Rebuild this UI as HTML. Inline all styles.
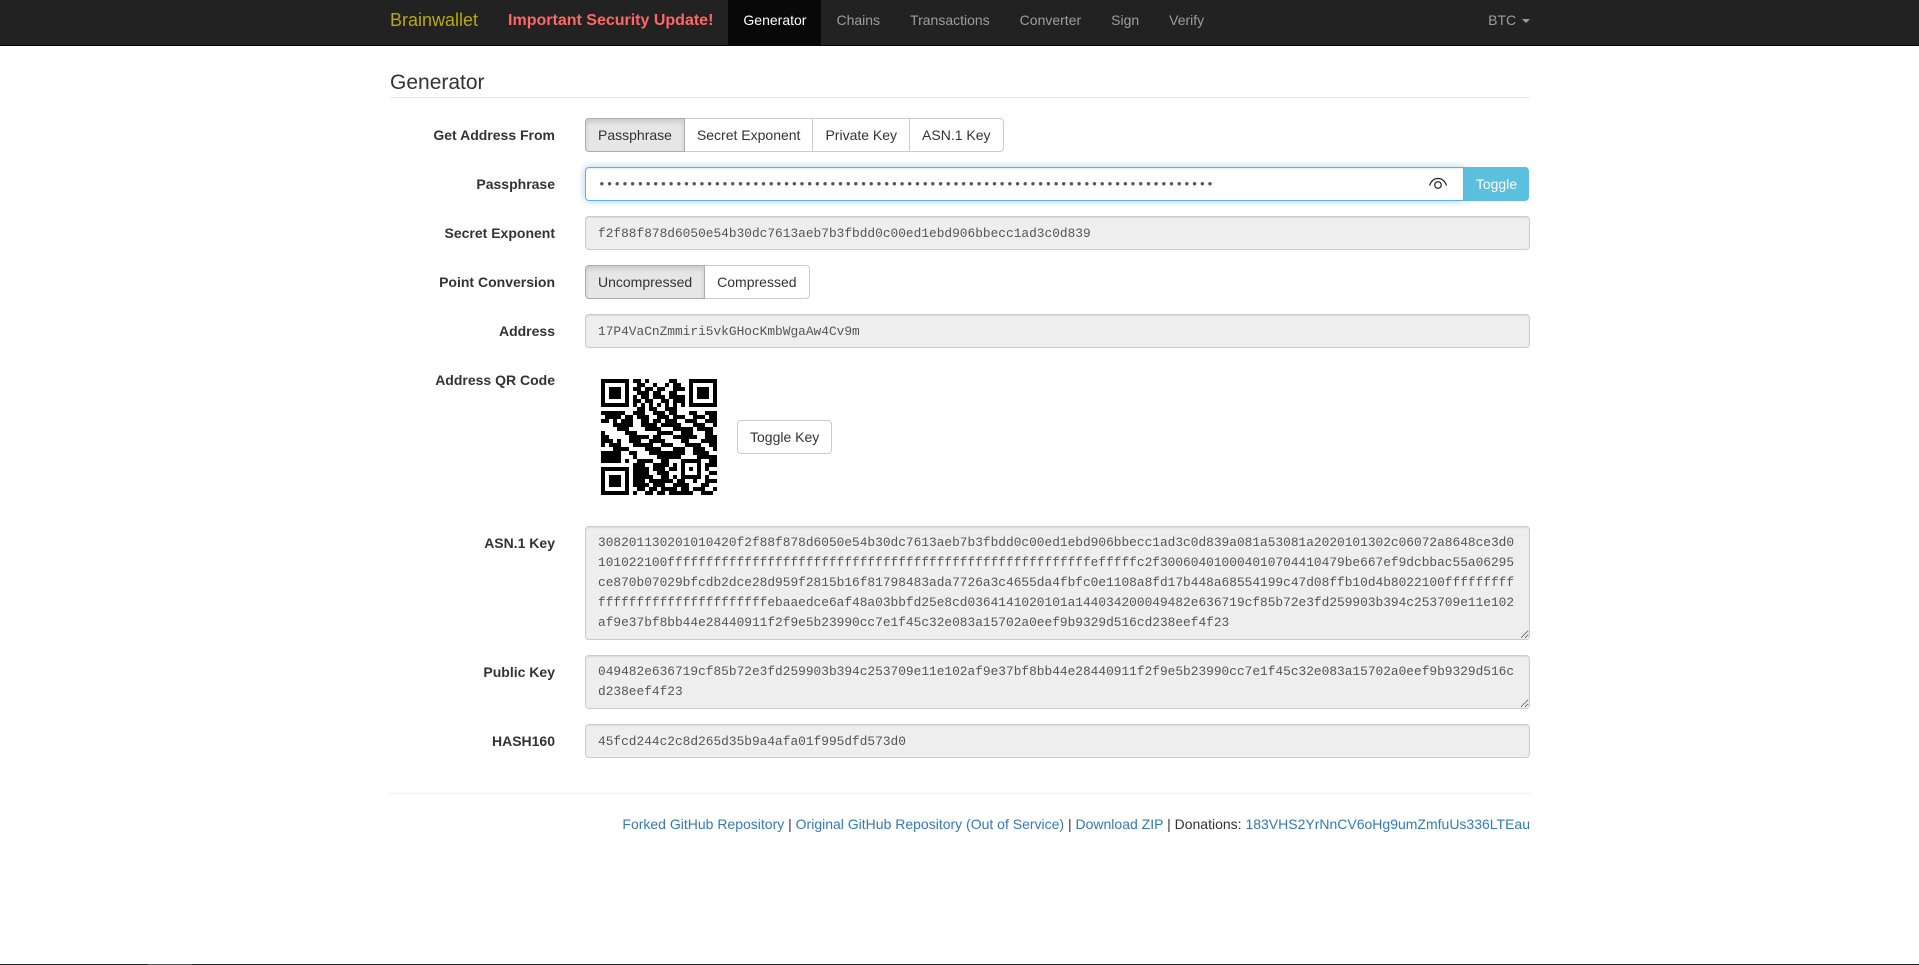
<!DOCTYPE html>
<html lang="en">
<head>
<meta charset="utf-8">
<title>Brainwallet</title>
<style>
*{box-sizing:border-box}
html,body{margin:0;padding:0;width:1919px;height:965px;overflow:hidden;background:#fff}
body{font-family:"Liberation Sans",Arial,sans-serif;font-size:14px;line-height:20px;color:#333;position:relative}
a{color:#337ab7;text-decoration:none}
.nav{height:46px;background:#222;border-bottom:1px solid #080808}
.wrap{width:1170px;margin:0 0 0 375px;padding:0 15px;position:relative}
.nav a{float:left;color:#9d9d9d;padding:10px 15px 15px;height:45px}
.nav a.brand{font-size:18px;color:#b8a90c;margin-left:-15px}
.nav a.imp{font-size:16px;font-weight:bold;color:#f66;padding-top:10.5px}
.nav a.act{color:#fff;background:#080808}
.nav a.btc{position:absolute;right:15px;top:0;float:none;padding:10px 0 15px}
.caret{display:inline-block;width:0;height:0;margin-left:2px;vertical-align:middle;border-top:4px solid;border-right:4px solid transparent;border-left:4px solid transparent}
.legend{margin:21px 0 20px;font-size:21px;line-height:32px;height:31px;border-bottom:1px solid #e5e5e5}
.row{position:relative;margin-bottom:15px;padding-left:195px;min-height:34px}
.row>label{position:absolute;left:0;top:7px;width:165px;text-align:right;font-weight:bold}
.ctl{display:block;width:945px;height:34px;padding:6px 12px;border:1px solid #ccc;border-radius:4px;background:#eee;color:#555;box-shadow:inset 0 1px 1px rgba(0,0,0,.075);font-family:"Liberation Mono",monospace;font-size:12.83px;line-height:20px;margin:0;outline:0}
textarea.ctl{word-break:break-all;overflow:hidden}
.grp{display:flex}
.btn{display:inline-block;height:34px;padding:6px 12px;border:1px solid #ccc;background:#fff;color:#333;font-size:14px;line-height:20px;white-space:nowrap}
.grp .btn{margin-left:-1px}
.grp .btn:first-child{margin-left:0;border-radius:4px 0 0 4px}
.grp .btn:last-child{border-radius:0 4px 4px 0}
.grp .btn.on{background:#e6e6e6;border-color:#adadad;box-shadow:inset 0 3px 5px rgba(0,0,0,.125);position:relative}
.pw{display:flex;width:945px;position:relative}
.pw input{width:879px;flex:none;background:#fff;border-color:#66afe9;border-radius:4px 0 0 4px;box-shadow:inset 0 1px 1px rgba(0,0,0,.075),0 0 8px rgba(102,175,233,.6);position:relative;z-index:1}
.pw .tog{width:65px;flex:none;height:34px;background:#5bc0de;color:#fff;border:1px solid #5bc0de;border-radius:0 4px 4px 0;text-align:center;padding:6px 0}
.pw svg{position:absolute;left:843px;top:8px;z-index:2}
.qr{position:absolute;left:211px;top:16px}
.tk{position:absolute;left:347px;top:57px;border-radius:4px}
hr{border:0;border-top:1px solid #eee;margin:35px 0 20px;height:0}
.foot{text-align:right;white-space:nowrap;height:20px;color:#333}
.bar{position:absolute;left:0;top:964px;width:1919px;height:1px;background:#202124}
.bar i{position:absolute;left:148px;width:44px;height:1px;background:#555;display:block}
</style>
</head>
<body>
<div class="nav"><div class="wrap">
<a class="brand" href="#">Brainwallet</a>
<a class="imp" href="#">Important Security Update!</a>
<a class="act" href="#">Generator</a>
<a href="#">Chains</a>
<a href="#">Transactions</a>
<a href="#">Converter</a>
<a href="#">Sign</a>
<a href="#">Verify</a>
<a class="btc" href="#">BTC <span class="caret"></span></a>
</div></div>
<div class="wrap">
<div class="legend">Generator</div>

<div class="row"><label>Get Address From</label>
<div class="grp"><span class="btn on">Passphrase</span><span class="btn">Secret Exponent</span><span class="btn">Private Key</span><span class="btn">ASN.1 Key</span></div></div>

<div class="row"><label>Passphrase</label>
<div class="pw"><input class="ctl" type="password" value="................................................................................"><span class="tog">Toggle</span>
<svg width="20" height="20" viewBox="0 0 20 20" fill="none" stroke="#222" stroke-width="1.2"><path d="M1.5 10.5C3.5 5 7 3.5 10 3.5s6.500 1.500 8.500 7"/><circle cx="10" cy="10" r="3.300"/></svg></div></div>

<div class="row"><label>Secret Exponent</label>
<input class="ctl" readonly value="f2f88f878d6050e54b30dc7613aeb7b3fbdd0c00ed1ebd906bbecc1ad3c0d839"></div>

<div class="row"><label>Point Conversion</label>
<div class="grp"><span class="btn on">Uncompressed</span><span class="btn">Compressed</span></div></div>

<div class="row"><label>Address</label>
<input class="ctl" readonly value="17P4VaCnZmmiri5vkGHocKmbWgaAw4Cv9m"></div>

<div class="row" style="height:148px"><label>Address QR Code</label>
<svg class="qr" width="116" height="116" viewBox="0 0 29 29" shape-rendering="crispEdges"><path fill="#000" fill-rule="evenodd" d="M0 0h7v7H0zM1 1v5h5V1zM2 2h3v3H2zM22 0h7v7h-7zM23 1v5h5V1zM24 2h3v3h-3zM0 22h7v7H0zM1 23v5h5v-5zM2 24h3v3H2z"/><path fill="none" stroke="#000" d="M8 .5h2M11 .5h1M17 .5h2M9 1.5h2M13 1.5h1M16 1.5h1M18 1.5h2M8 2.5h2M11 2.5h2M14 2.5h2M18 2.5h3M9 3.5h3M13 3.5h2M17 3.5h2M8 4.5h1M10 4.5h2M13 4.5h3M17 4.5h4M8 5.5h2M11 5.5h2M15 5.5h2M18 5.5h3M8 6.500h1M10 6.500h1M12 6.500h1M14 6.500h1M16 6.500h1M18 6.500h1M20 6.500h1M9 7.500h2M12 7.500h2M16 7.500h3M0 8.500h6M8 8.500h3M13 8.500h3M17 8.500h2M22 8.500h2M26 8.500h3M1 9.500h4M6 9.500h2M9 9.500h3M14 9.500h3M18 9.500h3M23 9.500h3M27 9.500h2M0 10.500h2M3 10.500h1M5 10.500h3M10 10.500h2M13 10.500h2M16 10.500h3M21 10.500h3M26 10.500h3M3 11.500h5M10 11.500h4M15 11.500h5M23 11.500h3M28 11.500h1M4 12.500h3M11 12.500h4M18 12.500h5M24 12.500h4M0 13.500h1M6 13.500h3M14 13.500h4M20 13.500h3M26 13.500h2M0 14.500h2M7 14.500h5M13 14.500h2M18 14.500h6M26 14.500h3M0 15.500h3M4 15.500h1M7 15.500h3M12 15.500h4M20 15.500h2M25 15.500h4M0 16.500h1M2 16.500h3M8 16.500h5M15 16.500h3M21 16.500h4M27 16.500h2M3 17.500h4M11 17.500h4M18 17.500h3M23 17.500h3M28 17.500h1M0 18.500h5M7 18.500h2M12 18.500h9M23 18.500h4M0 19.500h5M8 19.500h1M14 19.500h6M24 19.500h5M0 20.500h5M6 20.500h1M9 20.500h4M15 20.500h2M20 20.500h5M27 20.500h2M8 21.500h3M13 21.500h4M18 21.500h1M20 21.500h1M24 21.500h1M26 21.500h3M8 22.500h4M13 22.500h3M17 22.500h2M20 22.500h1M22 22.500h1M24 22.500h1M26 22.500h1M8 23.500h4M14 23.500h3M20 23.500h1M24 23.500h1M27 23.500h2M8 24.500h5M15 24.500h2M18 24.500h1M20 24.500h5M26 24.500h1M8 25.500h3M12 25.500h6M19 25.500h2M23 25.500h1M26 25.500h3M8 26.500h4M13 26.500h3M18 26.500h4M25 26.500h2M9 27.500h2M12 27.500h2M15 27.500h4M20 27.500h2M23 27.500h3M28 27.500h1M8 28.500h1M11 28.500h2M14 28.500h2M17 28.500h6M25 28.500h3"/></svg>
<span class="btn tk">Toggle Key</span></div>

<div class="row"><label style="top:7px">ASN.1 Key</label>
<textarea class="ctl" readonly rows="5" style="height:114px">308201130201010420f2f88f878d6050e54b30dc7613aeb7b3fbdd0c00ed1ebd906bbecc1ad3c0d839a081a53081a2020101302c06072a8648ce3d0101022100fffffffffffffffffffffffffffffffffffffffffffffffffffffffefffffc2f300604010004010704410479be667ef9dcbbac55a06295ce870b07029bfcdb2dce28d959f2815b16f81798483ada7726a3c4655da4fbfc0e1108a8fd17b448a68554199c47d08ffb10d4b8022100fffffffffffffffffffffffffffffffebaaedce6af48a03bbfd25e8cd0364141020101a144034200049482e636719cf85b72e3fd259903b394c253709e11e102af9e37bf8bb44e28440911f2f9e5b23990cc7e1f45c32e083a15702a0eef9b9329d516cd238eef4f23</textarea></div>

<div class="row"><label>Public Key</label>
<textarea class="ctl" readonly rows="2" style="height:54px">049482e636719cf85b72e3fd259903b394c253709e11e102af9e37bf8bb44e28440911f2f9e5b23990cc7e1f45c32e083a15702a0eef9b9329d516cd238eef4f23</textarea></div>

<div class="row"><label>HASH160</label>
<input class="ctl" readonly value="45fcd244c2c8d265d35b9a4afa01f995dfd573d0"></div>

<hr>
<div class="foot"><a href="#">Forked GitHub Repository</a> | <a href="#">Original GitHub Repository (Out of Service)</a> | <a href="#">Download ZIP</a> | Donations: <a href="#">183VHS2YrNnCV6oHg9umZmfuUs336LTEau</a></div>
</div>
<div class="bar"><i></i></div>
</body>
</html>
